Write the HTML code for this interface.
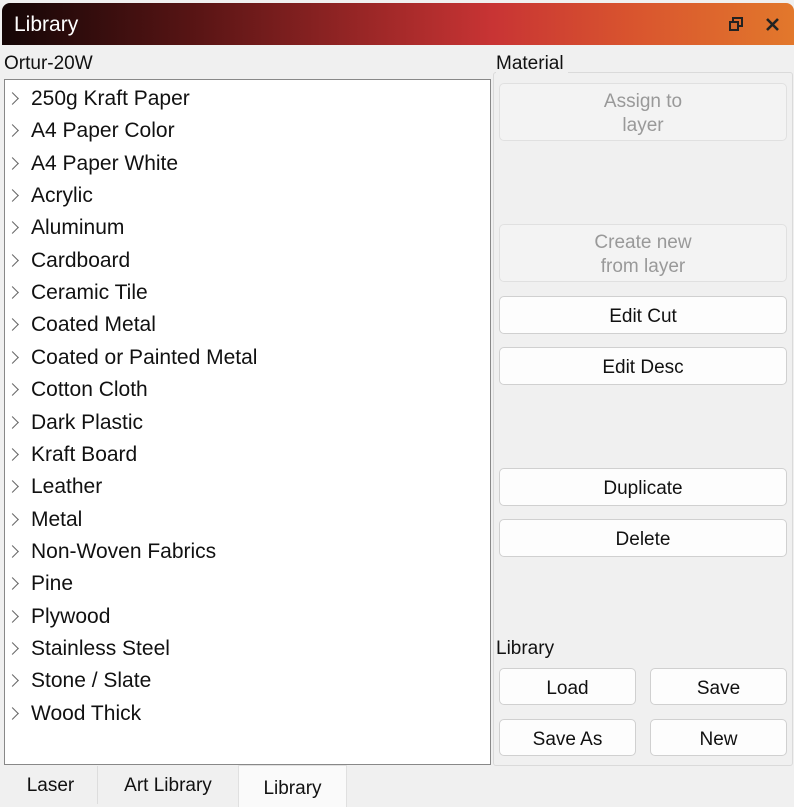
<!DOCTYPE html><html><head><style>
body{margin:0;width:794px;height:807px;background:#f0f0f0;font-family:"Liberation Sans",sans-serif;position:relative;overflow:hidden}
.t{position:absolute;left:2px;top:3px;width:792px;height:42px;border-radius:8px 8px 0 0;background:linear-gradient(90deg,#140606 0%,#5a1515 25%,#a02828 48%,#c83434 62%,#d9552e 80%,#e2782c 100%)}
.t span{position:absolute;left:12px;top:10px;color:#fff;font-size:21px}
.a{position:absolute;font-size:19px;color:#111}
.list{position:absolute;left:4px;top:79px;width:485px;height:684px;background:#fff;border:1px solid #888}
.it{position:absolute;left:26px;font-size:21px;color:#111}
.ch{position:absolute;left:3px;width:8px;height:8px;border-right:1.5px solid #666;border-top:1.5px solid #666;transform:rotate(45deg)}
.b{position:absolute;box-sizing:border-box;border:1px solid #d0d0d0;border-radius:5px;background:#fdfdfd;text-align:center;font-size:19px;color:#111;display:flex;align-items:center;justify-content:center;line-height:24px;padding-top:4px}
.d{background:#f3f3f3;color:#999;border-color:#e0e0e0}
.g{position:absolute;border:1px solid #dadada;border-radius:3px}
.tab{position:absolute;top:766px;height:38px;font-size:19px;color:#111;display:flex;align-items:center;justify-content:center;box-sizing:border-box;padding-top:2px}
</style></head><body>
<div class="t"><span>Library</span>
<svg style="position:absolute;right:50px;top:13px" width="16" height="16" viewBox="0 0 16 16"><rect x="5" y="2" width="9" height="8" fill="none" stroke="#222" stroke-width="2"/><rect x="2" y="6" width="8" height="8" fill="#d56a2e" stroke="#222" stroke-width="2"/></svg>
<svg style="position:absolute;right:14px;top:14px" width="15" height="15" viewBox="0 0 15 15"><path d="M2 2L13 13M13 2L2 13" stroke="#222" stroke-width="2.6"/></svg></div>
<div class="a" style="left:4px;top:53px">Ortur-20W</div>
<div class="list"></div>
<div class="g" style="left:493px;top:72px;width:298px;height:692px"></div>
<div class="a" style="left:496px;top:53px;background:#f0f0f0;padding-right:4px">Material</div>
<div class="a" style="left:496px;top:638px;background:#f0f0f0;padding-right:4px">Library</div>
<div class="b d" style="left:499px;top:83px;width:288px;height:58px">Assign to<br>layer</div>
<div class="b d" style="left:499px;top:224px;width:288px;height:58px">Create new<br>from layer</div>
<div class="b" style="left:499px;top:296px;width:288px;height:38px">Edit Cut</div>
<div class="b" style="left:499px;top:347px;width:288px;height:38px">Edit Desc</div>
<div class="b" style="left:499px;top:468px;width:288px;height:38px">Duplicate</div>
<div class="b" style="left:499px;top:519px;width:288px;height:38px">Delete</div>
<div class="b" style="left:499px;top:668px;width:137px;height:37px">Load</div>
<div class="b" style="left:650px;top:668px;width:137px;height:37px">Save</div>
<div class="b" style="left:499px;top:719px;width:137px;height:37px">Save As</div>
<div class="b" style="left:650px;top:719px;width:137px;height:37px">New</div>
<div class="tab" style="left:4px;width:94px;border-right:1px solid #ddd">Laser</div>
<div class="tab" style="left:98px;width:140px">Art Library</div>
<div class="tab" style="left:238px;width:109px;background:#fafafa;border:1px solid #e0e0e0;border-bottom:none;top:765px;height:42px;padding-top:4px">Library</div>
<script>
var n=["250g Kraft Paper","A4 Paper Color","A4 Paper White","Acrylic","Aluminum","Cardboard","Ceramic Tile","Coated Metal","Coated or Painted Metal","Cotton Cloth","Dark Plastic","Kraft Board","Leather","Metal","Non-Woven Fabrics","Pine","Plywood","Stainless Steel","Stone / Slate","Wood Thick"];
var l=document.querySelector('.list');
n.forEach(function(s,i){var y=7+i*32.35;l.innerHTML+='<i class="ch" style="top:'+(y+7)+'px"></i><div class="it" style="top:'+y+'px">'+s+'</div>';});
</script>
</body></html>
